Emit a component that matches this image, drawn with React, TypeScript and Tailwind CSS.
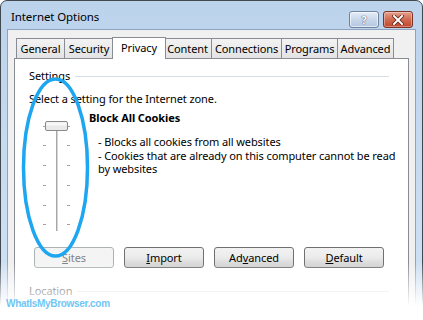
import React from "react";

const FONT = { fontFamily: '"Noto Sans", "Open Sans", sans-serif' };

function Tab({ label, w, selected }: { label: string; w: number; selected?: boolean }) {
  if (selected) {
    return (
      <div
        className="relative z-10 -mx-[2px] -mb-px flex h-[22px] items-start justify-center whitespace-nowrap border border-b-0 border-[#898c95] bg-white pt-[2px] text-[11px] leading-[16px] tracking-[-0.1px] text-black"
        style={{ width: w + 4 }}
      >
        {label}
      </div>
    );
  }
  return (
    <div
      className="-ml-px flex h-[20px] items-center justify-center whitespace-nowrap border border-b-0 border-[#898c95] bg-gradient-to-b from-[#f3f3f3] to-[#e3e3e3] text-[11px] leading-[16px] tracking-[-0.1px] text-black first:ml-0"
      style={{ width: w }}
    >
      {label}
    </div>
  );
}

function Btn({ children, disabled }: { children: React.ReactNode; disabled?: boolean }) {
  return (
    <div
      className={
        disabled
          ? "flex h-[21px] w-[80px] items-center justify-center rounded-[3px] border border-[#adb2b5] bg-[#f4f4f4] text-[11px] text-[#838383]"
          : "flex h-[21px] w-[80px] items-center justify-center rounded-[3px] border border-[#707070] bg-gradient-to-b from-[#f2f2f2] via-[#ebebeb] to-[#cfcfcf] text-[11px] text-black"
      }
    >
      {children}
    </div>
  );
}

export default function App() {
  return (
    <div className="relative h-[320px] w-[423px] overflow-hidden bg-white" style={FONT}>
      {/* Window */}
      <div className="flex h-[360px] w-[423px] flex-col rounded-t-[7px] border border-[#404850] bg-gradient-to-b from-[#bcd3ec] to-[#d4e4f5] px-[6px]">
        {/* Title bar */}
        <div className="flex h-[28px] items-start justify-between">
          <span className="mt-[8px] pl-[4px] text-[11.5px] leading-[16px] tracking-[-0.1px] text-black">Internet Options</span>
          <div className="mr-[3px] mt-[10px] flex gap-[4px]">
            <div className="flex h-[17px] w-[30px] items-center justify-center rounded-[3px] border border-[#6f82a0] bg-gradient-to-b from-[#e6eef8] via-[#c9d7ea] to-[#b4c7e0] shadow-[inset_0_0_0_1px_rgba(255,255,255,0.6)]">
              <span className="text-[11px] font-bold leading-none text-white" style={{ textShadow: "0 0 1px #44556f, 0 0 1px #44556f" }}>?</span>
            </div>
            <div className="flex h-[17px] w-[30px] items-center justify-center rounded-[3px] border border-[#7a3325] bg-gradient-to-b from-[#e6a08c] via-[#d06a50] to-[#c2452d] shadow-[inset_0_0_0_1px_rgba(255,255,255,0.35)]">
              <svg width="12" height="10" viewBox="0 0 12 10">
                <path d="M2 1 L10 9 M10 1 L2 9" stroke="#5a2318" strokeWidth="3.6" strokeLinecap="square" />
                <path d="M2 1 L10 9 M10 1 L2 9" stroke="#ffffff" strokeWidth="2" strokeLinecap="square" />
              </svg>
            </div>
          </div>
        </div>
        {/* Client area */}
        <div className="flex flex-1 flex-col border border-[#8ea3bf] bg-[#f0f0f0] pl-[6px] pr-[6px] pt-[7px]">
          {/* Tabs */}
          <div className="flex h-[21px] items-end pl-[2px]">
            <Tab label="General" w={49} />
            <Tab label="Security" w={50} />
            <Tab label="Privacy" w={50} selected />
            <Tab label="Content" w={49} />
            <Tab label="Connections" w={71} />
            <Tab label="Programs" w={57} />
            <Tab label="Advanced" w={57} />
          </div>
          {/* Panel */}
          <div className="flex flex-1 flex-col border border-[#898c95] bg-white pl-[14px] pr-[19px] pt-[10px] text-[11px] leading-[14px] tracking-[-0.1px] text-black">
            <div className="flex items-center">
              <span>Settings</span>
              <div className="ml-[5px] h-px flex-1 bg-[#d5dfe5]" />
            </div>
            <div className="mt-[9px] whitespace-nowrap">Select a setting for the Internet zone.</div>
            <div className="mt-[12px] flex">
              <svg width="30" height="112" viewBox="0 0 30 112" className="ml-[14px] mt-[3px] shrink-0">
                <rect x="13" y="8" width="2" height="102" fill="#d4d4d4" />
                <rect x="13" y="8" width="1" height="102" fill="#a8a8a8" />
                {[5, 24, 44, 64, 84, 103].map((y) => (
                  <g key={y}>
                    <rect x="0" y={y} width="3" height="1" fill="#a0a0a0" />
                    <rect x="24" y={y} width="3" height="1" fill="#a0a0a0" />
                  </g>
                ))}
                <rect x="2.5" y="0.5" width="22" height="9" rx="1.5" fill="#e9e9e9" stroke="#8a8a8a" />
                <rect x="3.5" y="1.5" width="20" height="3" fill="#f8f8f8" />
              </svg>
              <div className="ml-[16px] flex flex-col whitespace-nowrap">
                <div className="-mt-[7px] font-bold">Block All Cookies</div>
                <div className="mt-[10px] pl-[9px] leading-[13.5px]">
                  <div>- Blocks all cookies from all websites</div>
                  <div>- Cookies that are already on this computer cannot be read</div>
                  <div>by websites</div>
                </div>
              </div>
            </div>
            <div className="mt-[14px] flex gap-[10px] pl-[5px]">
              <Btn disabled>
                <span><u>S</u>ites</span>
              </Btn>
              <Btn>
                <span><u>I</u>mport</span>
              </Btn>
              <Btn>
                <span>Ad<u>v</u>anced</span>
              </Btn>
              <Btn>
                <span><u>D</u>efault</span>
              </Btn>
            </div>
            <div className="mt-[16px] flex items-center">
              <span>Location</span>
              <div className="ml-[5px] h-px flex-1 bg-[#d5dfe5]" />
            </div>
          </div>
        </div>
      </div>

      {/* Blue ellipse annotation */}
      <svg className="absolute left-0 top-0" width="423" height="320" viewBox="0 0 423 320">
        <ellipse cx="55.5" cy="167.5" rx="32" ry="88.5" fill="none" stroke="#1ea6f0" strokeWidth="3.5" />
      </svg>

      {/* Bottom fade */}
      <div className="absolute inset-x-0 top-[262px] h-[44px] bg-gradient-to-b from-transparent to-white" />
      <div className="absolute inset-x-0 top-[305px] bottom-0 bg-white" />

      {/* Watermark */}
      <div
        className="absolute left-[6px] top-[297px] whitespace-nowrap text-[10px] font-bold leading-[13px] tracking-[-0.3px] text-[#72c6f4]"
        style={{ fontFamily: '"Liberation Sans", Arial, sans-serif' }}
      >
        WhatIsMyBrowser.com
      </div>
    </div>
  );
}
